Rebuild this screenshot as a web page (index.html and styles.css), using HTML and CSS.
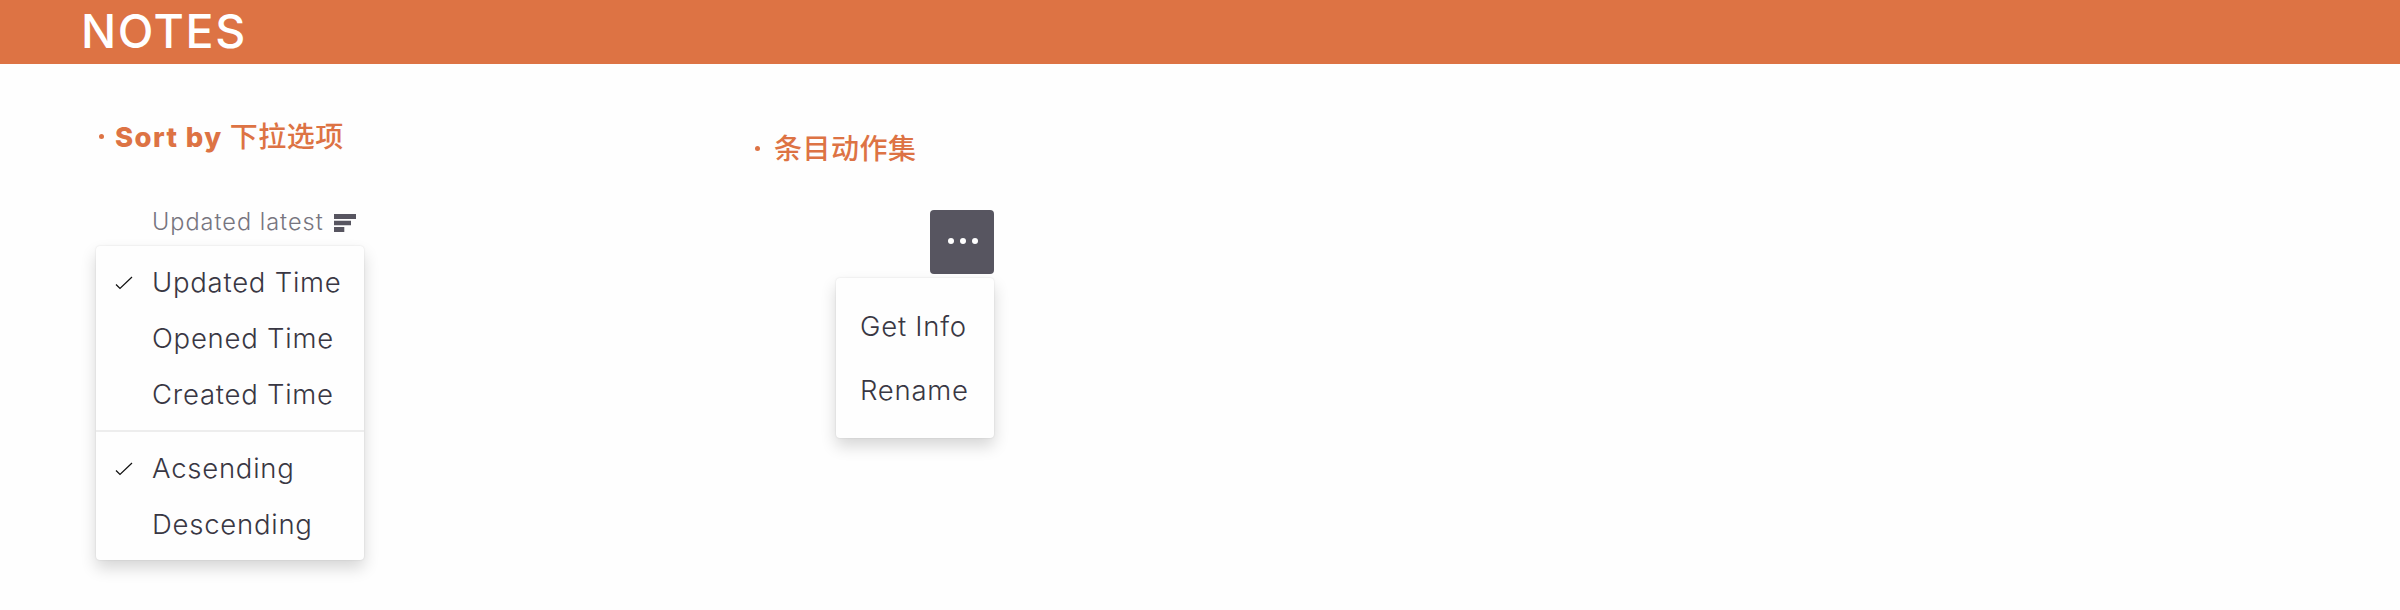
FILE: index.html
```html
<!DOCTYPE html>
<html lang="zh-CN">
<head>
<meta charset="utf-8">
<title>Notes</title>
<link rel="stylesheet" href="styles.css">
</head>
<body>
<header class="banner"><h1 class="banner-title">NOTES</h1></header>
<main class="notes">
  <section class="note note-sort">
    <h2 class="note-title"><span class="bullet"></span><span class="latin">Sort by</span><span class="cjk">下拉选项</span></h2>
    <div class="sort-trigger">
      <span class="sort-label">Updated latest</span>
      <svg class="sort-icon" width="22" height="18" viewBox="0 0 22 18"><path fill="#575560" d="M0 0h22v5H0zM0 6.700h17v4.600H0zM0 13h10.300v5H0z"/></svg>
    </div>
    <div class="menu menu-sort">
      <ul class="group">
        <li class="item"><svg class="check" width="18" height="14" viewBox="0 0 18 14"><path d="M1 8.500l4 4L17 1"/></svg><span>Updated Time</span></li>
        <li class="item"><span>Opened Time</span></li>
        <li class="item"><span>Created Time</span></li>
      </ul>
      <ul class="group">
        <li class="item"><svg class="check" width="18" height="14" viewBox="0 0 18 14"><path d="M1 8.500l4 4L17 1"/></svg><span>Acsending</span></li>
        <li class="item"><span>Descending</span></li>
      </ul>
    </div>
  </section>
  <section class="note note-actions">
    <h2 class="note-title"><span class="bullet"></span><span class="cjk">条目动作集</span></h2>
    <button class="more" aria-label="More"><i class="dot"></i><i class="dot"></i><i class="dot"></i></button>
    <ul class="menu menu-actions">
      <li class="item">Get Info</li>
      <li class="item">Rename</li>
    </ul>
  </section>
</main>
</body>
</html>
```
FILE: styles.css
```css
* { box-sizing: border-box; margin: 0; padding: 0; }
body {
  width: 2400px;
  height: 610px;
  overflow: hidden;
  background: #fefefe;
  font-family: Inter, "Noto Sans CJK SC", sans-serif;
  color: #393743;
}
ul { list-style: none; }
.banner { height: 64px; padding-left: 81px; background: #dd7344; }
.banner-title {
  font-size: 46.5px;
  font-weight: 500;
  line-height: 63px;
  letter-spacing: 1.6px;
  color: #fff;
}
.notes { display: flex; align-items: flex-start; padding-left: 96px; }
.note { display: flex; flex-direction: column; }
.note-sort { width: 658px; padding-top: 52px; }
.note-actions { width: 240px; padding-top: 64px; }
.note-title {
  display: flex;
  align-items: center;
  height: 40px;
  color: #dd7344;
  font-size: 27.5px;
  line-height: 40px;
  white-space: nowrap;
}
.bullet { width: 5px; height: 5px; border-radius: 50%; background: #dd7344; }
.note-sort .bullet { margin: 0 11px 0 3px; }
.note-actions .bullet { margin: 0 14px 0 1px; }
.latin { padding-top: 1px; font-weight: 800; letter-spacing: 1.4px; margin-right: 7px; }
.cjk {
  padding-bottom: 2px;
  font-family: "Noto Sans CJK SC", sans-serif;
  font-weight: 500;
  font-size: 28px;
  letter-spacing: 0.5px;
}
.sort-trigger {
  display: flex;
  align-items: center;
  width: 260px;
  height: 36px;
  margin-top: 48px;
  padding-left: 56px;
}
.sort-label {
  flex: 1;
  padding-bottom: 2px;
  font-size: 23.5px;
  font-weight: 300;
  letter-spacing: 1px;
  color: #77757f;
  white-space: nowrap;
}
.sort-icon { margin-top: 2px; }
.menu {
  background: #fefefe;
  border-radius: 4px;
  box-shadow: 0 8px 16px rgba(0, 0, 0, 0.16), 0 0 2px rgba(0, 0, 0, 0.12);
  font-size: 27.5px;
  font-weight: 300;
  letter-spacing: 0.75px;
  white-space: nowrap;
}
.menu-sort { width: 268px; margin-top: 6px; }
.group { padding: 8px 0; }
.group + .group { border-top: 2px solid #ededed; }
.group .item {
  display: grid;
  grid-template-columns: 37px 1fr;
  align-items: center;
  height: 56px;
  padding-left: 19px;
}
.group .item span { grid-column: 2; grid-row: 1; }
.check { grid-row: 1; margin-top: 2px; fill: none; stroke: #111; stroke-width: 1.25; }
.more {
  display: flex;
  align-items: center;
  justify-content: center;
  align-self: flex-end;
  gap: 6px;
  width: 64px;
  height: 64px;
  margin-top: 42px;
  padding: 0 0 2px 2px;
  border: 0;
  border-radius: 4px;
  background: #575560;
}
.dot { width: 6px; height: 6px; border-radius: 50%; background: #fff; }
.menu-actions { align-self: flex-end; width: 158px; margin-top: 4px; padding: 16px 0 16px 24px; }
.menu-actions .item { display: flex; align-items: center; height: 64px; }
```
